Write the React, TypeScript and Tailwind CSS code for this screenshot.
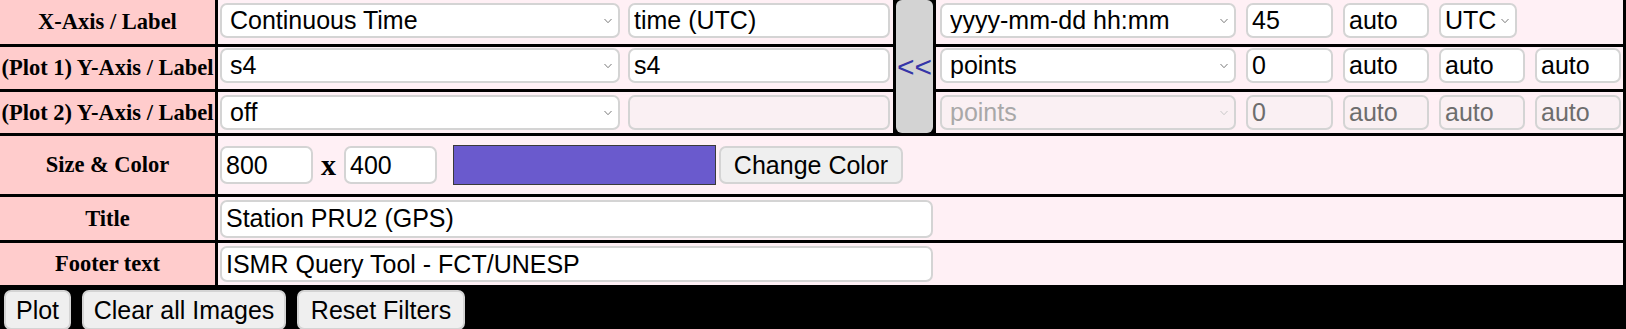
import React from 'react';

const sans = "font-['Liberation_Sans',Arial,sans-serif]";
const serif = "font-['Liberation_Serif','Times_New_Roman',serif]";

const Chevron = ({ faded }: { faded?: boolean }) => (
  <svg
    className="absolute right-[8px] top-1/2 -translate-y-1/2 pointer-events-none"
    width="8"
    height="5"
    viewBox="0 0 8 5"
  >
    <path d="M0.5 0.5 L4 4.2 L7.5 0.5" stroke={faded ? '#c8c8c8' : '#7a7a7a'} strokeWidth="1" fill="none" />
  </svg>
);

const Select = ({
  value,
  className,
  disabled,
  tight,
}: {
  value: string;
  className: string;
  disabled?: boolean;
  tight?: boolean;
}) => (
  <div className={`relative shrink-0 h-[35px] ${className}`}>
    <select
      disabled={disabled}
      defaultValue={value}
      className={`appearance-none w-full h-full rounded-[7px] border-2 border-[#d4d4d4] ${
        tight ? 'pl-[4px] pr-[14px]' : 'pl-[8px] pr-[20px]'
      } text-[25px] leading-none outline-none ${sans} ${disabled ? 'bg-[#faf0f3] text-[#a8a8a8]' : 'bg-white text-black'}`}
    >
      <option value={value}>{value}</option>
    </select>
    <Chevron faded={disabled} />
  </div>
);

const Field = ({ value, className, disabled }: { value: string; className: string; disabled?: boolean }) => (
  <input
    disabled={disabled}
    defaultValue={value}
    className={`shrink-0 rounded-[7px] border-2 border-[#d4d4d4] px-[4px] text-[25px] leading-none outline-none ${sans} ${
      disabled ? 'bg-[#faf0f3] text-[#6d6d6d]' : 'bg-white text-black'
    } ${className}`}
  />
);

const Label = ({ text, row }: { text: string; row: string }) => (
  <div
    className={`col-start-1 ${row} bg-[#ffcccc] flex items-center justify-center whitespace-nowrap text-[22.5px] font-bold text-black ${serif}`}
  >
    {text}
  </div>
);

export default function App() {
  return (
    <div className={`w-[1626px] h-[329px] bg-black overflow-hidden ${sans}`}>
      <div className="grid w-[1623px] grid-cols-[215px_675px_37px_687px] grid-rows-[44px_42px_41px_58px_43px_42px] gap-[3px]">
        <Label text="X-Axis / Label" row="row-start-1" />
        <div className="col-start-2 row-start-1 bg-[#fff0f5] flex items-start gap-[8px] pl-[2px] pt-[3px]">
          <Select value="Continuous Time" className="w-[400px]" />
          <Field value="time (UTC)" className="w-[262px] h-[35px]" />
        </div>
        <button className="col-start-3 row-start-1 row-span-3 bg-[#d3d3d3] rounded-[6px] text-[30px] text-[#3535a8] flex items-center justify-center p-0 leading-none">
          &lt;&lt;
        </button>
        <div className="col-start-4 row-start-1 bg-[#fff0f5] flex items-start gap-[10px] pl-[4px] pt-[3px]">
          <Select value="yyyy-mm-dd hh:mm" className="w-[296px]" />
          <Field value="45" className="w-[87px] h-[35px]" />
          <Field value="auto" className="w-[86px] h-[35px]" />
          <Select value="UTC" tight className="w-[78px]" />
        </div>

        <Label text="(Plot 1) Y-Axis / Label" row="row-start-2" />
        <div className="col-start-2 row-start-2 bg-[#fff0f5] flex items-start gap-[8px] pl-[2px] pt-[1px]">
          <Select value="s4" className="w-[400px]" />
          <Field value="s4" className="w-[262px] h-[35px]" />
        </div>
        <div className="col-start-4 row-start-2 bg-[#fff0f5] flex items-start gap-[10px] pl-[4px] pt-[1px]">
          <Select value="points" className="w-[296px]" />
          <Field value="0" className="w-[87px] h-[35px]" />
          <Field value="auto" className="w-[86px] h-[35px]" />
          <Field value="auto" className="w-[86px] h-[35px]" />
          <Field value="auto" className="w-[86px] h-[35px]" />
        </div>

        <Label text="(Plot 2) Y-Axis / Label" row="row-start-3" />
        <div className="col-start-2 row-start-3 bg-[#fff0f5] flex items-start gap-[8px] pl-[2px] pt-[3px]">
          <Select value="off" className="w-[400px]" />
          <Field value="" disabled className="w-[262px] h-[35px]" />
        </div>
        <div className="col-start-4 row-start-3 bg-[#fff0f5] flex items-start gap-[10px] pl-[4px] pt-[3px]">
          <Select value="points" disabled className="w-[296px]" />
          <Field value="0" disabled className="w-[87px] h-[35px]" />
          <Field value="auto" disabled className="w-[86px] h-[35px]" />
          <Field value="auto" disabled className="w-[86px] h-[35px]" />
          <Field value="auto" disabled className="w-[86px] h-[35px]" />
        </div>

        <Label text="Size & Color" row="row-start-4" />
        <div className="col-start-2 col-span-3 row-start-4 bg-[#fff0f5] flex items-center pl-[2px]">
          <Field value="800" className="w-[93px] h-[38px]" />
          <span className={`w-[31px] text-center text-[30px] font-bold text-black leading-none ${serif}`}>x</span>
          <Field value="400" className="w-[93px] h-[38px]" />
          <div className="ml-[16px] w-[263px] h-[40px] bg-[#6a5acd] border border-[#3a3a3a]" />
          <button className="ml-[3px] w-[184px] h-[38px] rounded-[7px] border-2 border-[#d4d4d4] bg-[#efefef] text-[25px] text-black leading-none">
            Change Color
          </button>
        </div>

        <Label text="Title" row="row-start-5" />
        <div className="col-start-2 col-span-3 row-start-5 bg-[#fff0f5] flex items-center pl-[2px]">
          <Field value="Station PRU2 (GPS)" className="w-[713px] h-[38px]" />
        </div>

        <Label text="Footer text" row="row-start-6" />
        <div className="col-start-2 col-span-3 row-start-6 bg-[#fff0f5] flex items-center pl-[2px]">
          <Field value="ISMR Query Tool - FCT/UNESP" className="w-[713px] h-[36px]" />
        </div>
      </div>

      <div className="flex gap-[11px] pl-[4px] pt-[5px]">
        {[
          { name: 'Plot', w: 'w-[67px]' },
          { name: 'Clear all Images', w: 'w-[204px]' },
          { name: 'Reset Filters', w: 'w-[168px]' },
        ].map((b) => (
          <button
            key={b.name}
            className={`${b.w} shrink-0 h-[40px] rounded-[7px] border-2 border-[#d4d4d4] bg-[#efefef] text-[25px] text-black leading-none`}
          >
            {b.name}
          </button>
        ))}
      </div>
    </div>
  );
}
